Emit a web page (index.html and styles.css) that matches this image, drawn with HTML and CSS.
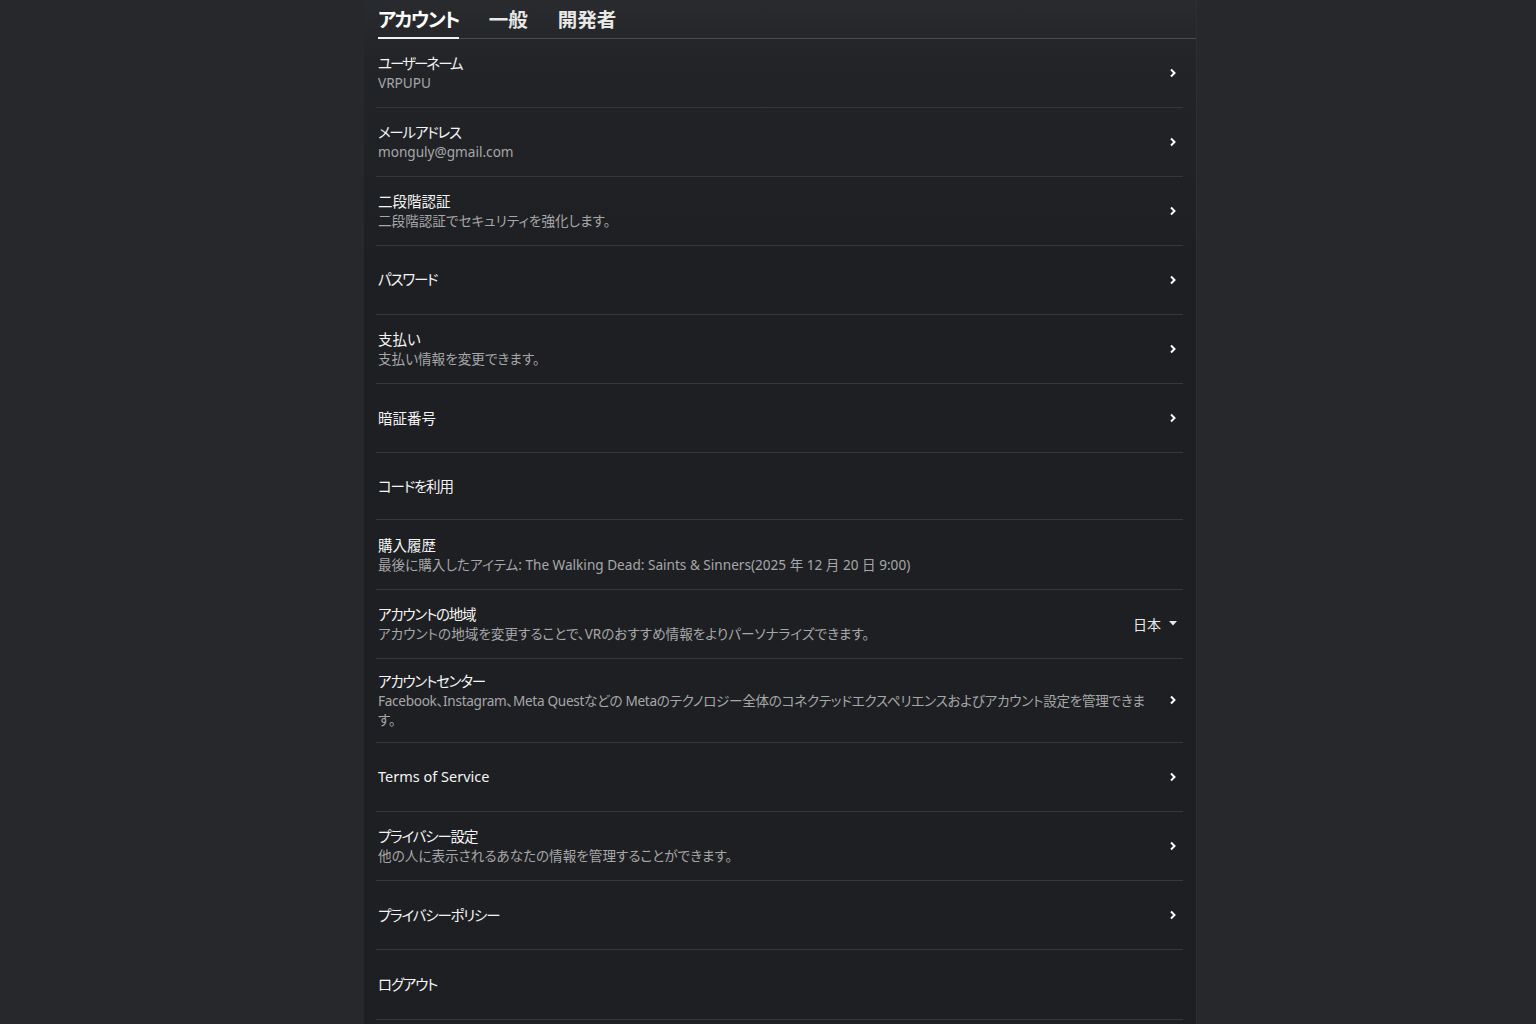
FILE: index.html
```html
<!DOCTYPE html>
<html lang="ja">
<head>
  <meta charset="UTF-8" />
  <title>設定</title>
  <link rel="stylesheet" href="styles.css">
</head>
<body>
  <div class="panel">
    <div class="tabs">
      <div class="tab active">アカウント</div>
      <div class="tab">一般</div>
      <div class="tab">開発者</div>
    </div>

    <div class="list">
      <div class="row">
        <div class="text"><div class="title kana wide">ユーザーネーム</div><div class="sub">VRPUPU</div></div>
        <svg class="chev" viewBox="0 0 8 10"><path d="M2 1.5 5.5 5 2 8.5" /></svg>
      </div>
      <div class="row">
        <div class="text"><div class="title kana">メールアドレス</div><div class="sub">monguly@gmail.com</div></div>
        <svg class="chev" viewBox="0 0 8 10"><path d="M2 1.5 5.5 5 2 8.5" /></svg>
      </div>
      <div class="row">
        <div class="text"><div class="title">二段階認証</div><div class="sub">二段階認証でセキュリティを強化します。</div></div>
        <svg class="chev" viewBox="0 0 8 10"><path d="M2 1.5 5.5 5 2 8.5" /></svg>
      </div>
      <div class="row">
        <div class="text"><div class="title kana">パスワード</div></div>
        <svg class="chev" viewBox="0 0 8 10"><path d="M2 1.5 5.5 5 2 8.5" /></svg>
      </div>
      <div class="row">
        <div class="text"><div class="title">支払い</div><div class="sub">支払い情報を変更できます。</div></div>
        <svg class="chev" viewBox="0 0 8 10"><path d="M2 1.5 5.5 5 2 8.5" /></svg>
      </div>
      <div class="row">
        <div class="text"><div class="title">暗証番号</div></div>
        <svg class="chev" viewBox="0 0 8 10"><path d="M2 1.5 5.5 5 2 8.5" /></svg>
      </div>
      <div class="row short">
        <div class="text"><div class="title kana">コードを利用</div></div>
      </div>
      <div class="row">
        <div class="text"><div class="title">購入履歴</div><div class="sub">最後に購入したアイテム: The Walking Dead: Saints &amp; Sinners(2025 年 12 月 20 日 9:00)</div></div>
      </div>
      <div class="row">
        <div class="text"><div class="title kana">アカウントの地域</div><div class="sub">アカウントの地域を変更することで、VRのおすすめ情報をよりパーソナライズできます。</div></div>
        <div class="select">日本 <svg class="caret" viewBox="0 0 8 5"><path d="M0 0h8L4 4.5z" /></svg></div>
      </div>
      <div class="row">
        <div class="text"><div class="title kana">アカウントセンター</div><div class="sub"><span class="line">Facebook、Instagram、Meta Questなどの Metaのテクノロジー全体のコネクテッドエクスペリエンスおよびアカウント設定を管理できま</span><br>す。</div></div>
        <svg class="chev" viewBox="0 0 8 10"><path d="M2 1.5 5.5 5 2 8.5" /></svg>
      </div>
      <div class="row">
        <div class="text"><div class="title">Terms of Service</div></div>
        <svg class="chev" viewBox="0 0 8 10"><path d="M2 1.5 5.5 5 2 8.5" /></svg>
      </div>
      <div class="row">
        <div class="text"><div class="title kana">プライバシー設定</div><div class="sub">他の人に表示されるあなたの情報を管理することができます。</div></div>
        <svg class="chev" viewBox="0 0 8 10"><path d="M2 1.5 5.5 5 2 8.5" /></svg>
      </div>
      <div class="row">
        <div class="text"><div class="title kana">プライバシーポリシー</div></div>
        <svg class="chev" viewBox="0 0 8 10"><path d="M2 1.5 5.5 5 2 8.5" /></svg>
      </div>
      <div class="row">
        <div class="text"><div class="title kana">ログアウト</div></div>
      </div>
    </div>
  </div>
</body>
</html>
```

FILE: styles.css
```css
body {
  margin: 0;
  background: #27282b;
  font-family: "Noto Sans", "Noto Sans CJK JP", sans-serif;
  font-feature-settings: "palt";
  color: #f2f2f2;
  height: 1024px;
  overflow: hidden;
}
.panel {
  width: 832px;
  margin-left: 364px;
  min-height: 1024px;
  background: linear-gradient(#2a2b2e 0, #232427 60px, #1e1f22 260px);
  border-right: 1px solid #2e2f32;
}
.tabs {
  display: flex;
  gap: 30px;
  margin-left: 14px;
  height: 38px;
  border-bottom: 1px solid #4a4b4e;
  align-items: flex-end;
}
.tab {
  font-size: 19.5px;
  font-weight: 700;
  line-height: 24px;
  padding-bottom: 7px;
  color: #e8e8e8;
  margin-bottom: -1px;
}
.tab.active {
  border-bottom: 2px solid #f2f2f2;
  padding-bottom: 5px;
  letter-spacing: -1.6px;
  color: #fff;
}
.list {
  margin: 0 13px 0 12px;
}
.row {
  display: flex;
  align-items: center;
  min-height: 69.2px;
  padding: 13px 0 13px 2px;
  box-sizing: border-box;
  border-bottom: 1px solid #36373a;
}
.row:first-child {
  min-height: 68.5px;
}
.row.short {
  min-height: 67px;
}
.text {
  flex: 1;
  min-width: 0;
}
.title {
  font-size: 14.5px;
  line-height: 19px;
  color: #f4f4f4;
}
.title.kana {
  letter-spacing: -1.2px;
}
.title.kana.wide {
  letter-spacing: -2px;
}
.sub {
  font-size: 13.6px;
  line-height: 19px;
  color: #a6a7a9;
}
.sub .line {
  white-space: nowrap;
  letter-spacing: -0.3px;
}
.chev {
  width: 8px;
  height: 10px;
  margin: 0 6px 0 10px;
  flex: none;
}
.chev path {
  fill: none;
  stroke: #fff;
  stroke-width: 2;
}
.select {
  font-size: 14px;
  color: #e8e8e8;
  display: flex;
  align-items: center;
  gap: 8px;
  margin-right: 6px;
}
.caret {
  width: 8px;
  height: 5px;
  fill: #e8e8e8;
}
```
